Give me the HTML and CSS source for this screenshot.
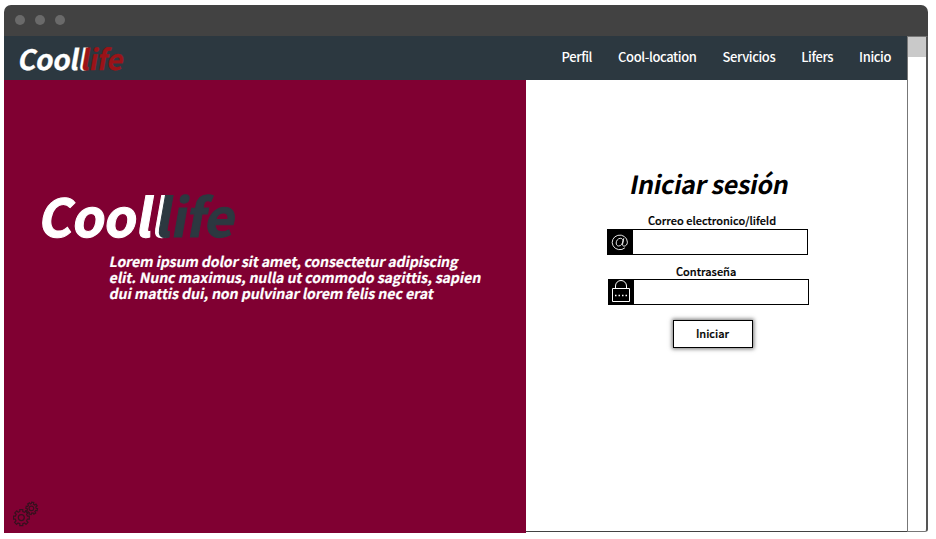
FILE: index.html
```html
<!DOCTYPE html>
<html lang="es">
<head>
<meta charset="utf-8">
<title>Coollife</title>
<link rel="stylesheet" href="styles.css">
</head>
<body>
<div class="window">
  <div class="titlebar"><i></i><i></i><i></i></div>
  <div class="viewport">
    <div class="page">
      <header class="nav">
        <div class="logo logo-small"><span>Cooll</span><span class="life">life</span></div>
        <nav class="links">
          <a>Perfil</a><a>Cool-location</a><a>Servicios</a><a>Lifers</a><a>Inicio</a>
        </nav>
      </header>
      <main class="content">
        <section class="hero">
          <div class="logo logo-large"><span>Cooll</span><span class="life">life</span></div>
          <p class="tagline"><span class="t1">Lorem ipsum dolor sit amet, consectetur adipiscing</span> <span>elit. Nunc maximus, nulla ut commodo sagittis, sapien</span> <span>dui mattis dui, non pulvinar lorem felis nec erat</span></p>
          <svg class="gears" width="26" height="26" viewBox="0 0 26 26" fill="none" stroke="#35101e" stroke-width="1.2">
            <path d="M6.8 10.5v-1.9h3v1.9l1.8.8 1.4-1.4 2 2-1.4 1.4.8 1.8h1.9v3h-1.9l-.8 1.8 1.4 1.4-2 2-1.4-1.4-1.8.8v1.9h-3v-1.9l-1.8-.8-1.4 1.4-2-2 1.4-1.4-.8-1.8H.5v-3h1.9l.8-1.8-1.4-1.4 2-2 1.4 1.4z"/>
            <circle cx="8.3" cy="16.6" r="3"/>
            <g transform="rotate(12 18.5 7)">
              <path d="M17.4 2.8V1.2h2.2v1.6l1.4.6 1.1-1.1 1.5 1.5-1.1 1.1.6 1.4h1.4v2.2h-1.4l-.6 1.4 1.1 1.1-1.5 1.5-1.1-1.1-1.4.6v1.4h-2.2V12l-1.4-.6-1.1 1.1-1.5-1.5L15 9.9l-.6-1.4H13V6.3h1.4L15 4.9l-1.1-1.1 1.5-1.5 1.1 1.1z"/>
              <circle cx="18.5" cy="7.4" r="2.3"/>
            </g>
          </svg>
        </section>
        <form class="login">
          <h1>Iniciar sesión</h1>
          <label class="user-label">Correo electronico/lifeId</label>
          <div class="field user">
            <svg width="26" height="26" viewBox="0 0 26 26" fill="none" stroke="#fff" stroke-width=".9">
              <path d="M17.9 18.8A7.6 7.3 0 1 1 20.4 13.2C20.3 15.7 18.8 17.1 17.1 17.1 15.7 17.1 15.3 16.2 15.6 15l1.2-5.8M16 11.8C15.7 9.9 14.5 9.2 13.2 9.3 10.9 9.5 9.2 11.7 9.2 14c0 1.8 1 3 2.5 3 2.3 0 3.9-2.3 4.3-5.2"/>
            </svg><input type="text">
          </div>
          <label class="pass-label">Contraseña</label>
          <div class="field pass">
            <svg width="26" height="26" viewBox="0 0 26 26" fill="none" stroke="#fff" stroke-width="1">
              <path d="M4.500 9.500h17v13h-17zM7.500 9.500V7a5.500 5.500 0 0 1 11 0v2.500"/>
              <path d="M7 16.500h1.500m2 0h1.500m2 0h1.500m2 0h1.500" stroke-width="1.500"/>
            </svg><input type="password">
          </div>
          <button type="button">Iniciar</button>
        </form>
      </main>
    </div>
    <div class="scrollbar"><div class="thumb"></div></div>
  </div>
</div>
</body>
</html>
```

FILE: styles.css
```css
* { box-sizing: border-box; }
body { margin: 0; background: #fff; font-family: "Noto Sans CJK SC", "Noto Sans", sans-serif; }
.window { width: 924px; height: 528px; margin: 5px 0 0 4px; }
.titlebar { height: 31px; background: #424242; border-radius: 7px 7px 0 0; display: flex; gap: 10px; padding: 10px 0 0 11px; }
.titlebar i { width: 10px; height: 10px; border-radius: 50%; background: #6a6a6a; }
.viewport { display: flex; height: 497px; }
.page { width: 903px; }
.nav { height: 44px; background: #2c3840; display: flex; justify-content: space-between; padding: 0 16px 0 15px; }
.logo { font-weight: 700; color: #fff; display: flex; white-space: nowrap; transform: skewX(-10deg); }
.logo-small { font-size: 28px; line-height: 44px; letter-spacing: -.4px; -webkit-text-stroke: .3px; }
.logo-small .life { color: #9b1318; margin-left: -6px; }
.links { display: flex; gap: 26px; color: #fff; font-size: 13px; font-weight: 500; line-height: 42px; letter-spacing: -.4px; white-space: nowrap; }
.content { display: flex; height: 453px; }
.hero { width: 522px; background: #800032; display: flex; flex-direction: column; align-items: flex-start; }
.logo-large { font-size: 52px; line-height: 60px; letter-spacing: -.6px; margin: 105px 0 0 37px; -webkit-text-stroke: 1px; }
.logo-large .life { color: #2c3840; margin-left: -12px; }
.tagline { margin: 8px 0 0 106px; color: #fff; font-size: 14px; line-height: 16px; font-weight: 700; letter-spacing: -.02px; white-space: nowrap; -webkit-text-stroke: .2px; }
.tagline span { display: block; width: max-content; transform: skewX(-11deg); }
.tagline .t1 { letter-spacing: -.07px; }
.gears { margin: auto 0 6px 9px; }
.login { width: 381px; height: 452px; border-bottom: 1px solid #424242; display: flex; flex-direction: column; align-items: flex-start; color: #000; white-space: nowrap; }
.login h1 { margin: 83px 0 0 105px; font-size: 25px; line-height: 40px; font-weight: 700; letter-spacing: -.3px; transform: skewX(-11deg); }
.login label { font-size: 11px; line-height: 16px; font-weight: 500; -webkit-text-stroke: .2px; }
.user-label { margin: 9px 0 1px 122px; }
.pass-label { margin: 8px 0 0 150px; }
.field { display: flex; width: 201px; height: 26px; border: 1px solid #000; }
.user { margin-left: 81px; }
.pass { margin-left: 82px; }
.field svg { flex: none; margin: -1px 0 0 -1px; background: #000; }
.field input { flex: 1; min-width: 0; border: 0; padding: 0 6px; outline: 0; background: #fff; }
.login button { margin: 15px 0 0 147px; width: 80px; height: 28px; padding: 0 1px 2px 0; border: 1px solid #000; background: #fff; box-shadow: 0 0 4px 1px rgba(0,0,0,.55); font: 500 11px/24px "Noto Sans CJK SC", sans-serif; color: #000; -webkit-text-stroke: .2px; }
.scrollbar { width: 21px; height: 496px; border: 1px solid #777; border-right: 2px solid #555; border-radius: 0 0 3px 0; }
.thumb { height: 20px; background: #c9c9c9; }
```
